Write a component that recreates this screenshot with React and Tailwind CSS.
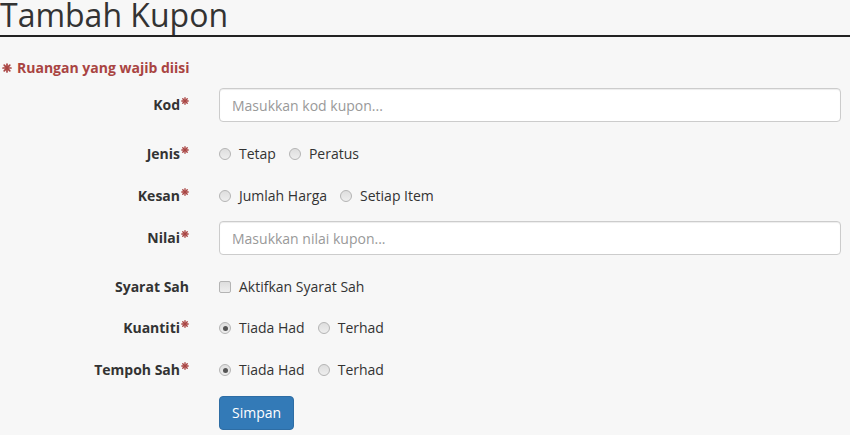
const Star = ({ className = "" }) => (
  <svg viewBox="0 0 10 10" className={className} aria-hidden="true">
    <g stroke="currentColor" strokeWidth="1.7" strokeLinecap="round">
      <line x1="5" y1="1" x2="5" y2="9" />
      <line x1="1" y1="5" x2="9" y2="5" />
      <line x1="2.2" y1="2.2" x2="7.8" y2="7.8" />
      <line x1="7.8" y1="2.2" x2="2.2" y2="7.8" />
    </g>
  </svg>
);

function Label({ text, required }) {
  return (
    <div className="w-[189px] shrink-0 flex justify-end items-center font-bold text-[14px] text-[#333]">
      <span className="leading-[20px]">{text}</span>
      {required && <Star className="w-[8px] h-[8px] text-[#a94442] self-start mt-[2px] ml-[1px]" />}
    </div>
  );
}

function Radio({ checked }) {
  return (
    <span className="w-[12px] h-[12px] rounded-full border border-[#b4b4b4] bg-gradient-to-b from-[#dedede] to-[#eeeeee] flex items-center justify-center shrink-0">
      {checked && <span className="w-[5px] h-[5px] rounded-full bg-[#555]" />}
    </span>
  );
}

function Options({ items, checkedIndex = -1 }) {
  return (
    <div className="flex items-center">
      {items.map((it, i) => (
        <div key={it} className="flex items-center mr-[13px]">
          <Radio checked={i === checkedIndex} />
          <span className="ml-[8px] text-[14px] text-[#333] leading-[20px]">{it}</span>
        </div>
      ))}
    </div>
  );
}

function Row({ label, required, children, className = "" }) {
  return (
    <div className={"flex items-center h-[34px] " + className}>
      <Label text={label} required={required} />
      <div className="ml-[30px] flex-1 mr-[9px] flex items-center">{children}</div>
    </div>
  );
}

function TextInput({ placeholder }) {
  return (
    <input
      className="w-full h-[34px] bg-white border border-[#ccc] rounded-[4px] px-[12px] text-[14px] text-[#555] placeholder:text-[#999] outline-none shadow-[inset_0_1px_1px_rgba(0,0,0,0.075)]"
      placeholder={placeholder}
    />
  );
}

export default function App() {
  return (
    <div
      className="w-[850px] h-[435px] overflow-hidden bg-[#f7f7f7] text-[#333]"
      style={{ fontFamily: '"Open Sans", "Liberation Sans", sans-serif' }}
    >
      <div className="border-b-2 border-[#222] pb-[6px]">
        <h1 className="text-[32px] leading-[29px] font-normal text-[#333]">Tambah Kupon</h1>
      </div>

      <div className="mt-[21px] flex items-center text-[14px] font-bold text-[#a94442] leading-[20px] pl-[2px]">
        <Star className="w-[10px] h-[10px] mr-[5px]" />
        Ruangan yang wajib diisi
      </div>

      <div className="mt-[10px]">
        <Row label="Kod" required className="mb-[15px]">
          <TextInput placeholder="Masukkan kod kupon..." />
        </Row>
        <Row label="Jenis" required className="mb-[8px]">
          <Options items={["Tetap", "Peratus"]} />
        </Row>
        <Row label="Kesan" required className="mb-[8px]">
          <Options items={["Jumlah Harga", "Setiap Item"]} />
        </Row>
        <Row label="Nilai" required className="mb-[15px]">
          <TextInput placeholder="Masukkan nilai kupon..." />
        </Row>
        <Row label="Syarat Sah" className="mb-[7px]">
          <div className="flex items-center">
            <span className="w-[12px] h-[12px] rounded-[2px] border border-[#b4b4b4] bg-gradient-to-b from-[#dedede] to-[#eeeeee]" />
            <span className="ml-[8px] text-[14px] leading-[20px]">Aktifkan Syarat Sah</span>
          </div>
        </Row>
        <Row label="Kuantiti" required className="mb-[8px]">
          <Options items={["Tiada Had", "Terhad"]} checkedIndex={0} />
        </Row>
        <Row label="Tempoh Sah" required className="mb-[9px]">
          <Options items={["Tiada Had", "Terhad"]} checkedIndex={0} />
        </Row>
        <div className="flex">
          <div className="w-[189px] shrink-0" />
          <button className="ml-[30px] h-[34px] px-[12px] bg-[#337ab7] border border-[#2e6da4] rounded-[4px] text-white text-[14px] leading-[20px]">
            Simpan
          </button>
        </div>
      </div>
    </div>
  );
}
